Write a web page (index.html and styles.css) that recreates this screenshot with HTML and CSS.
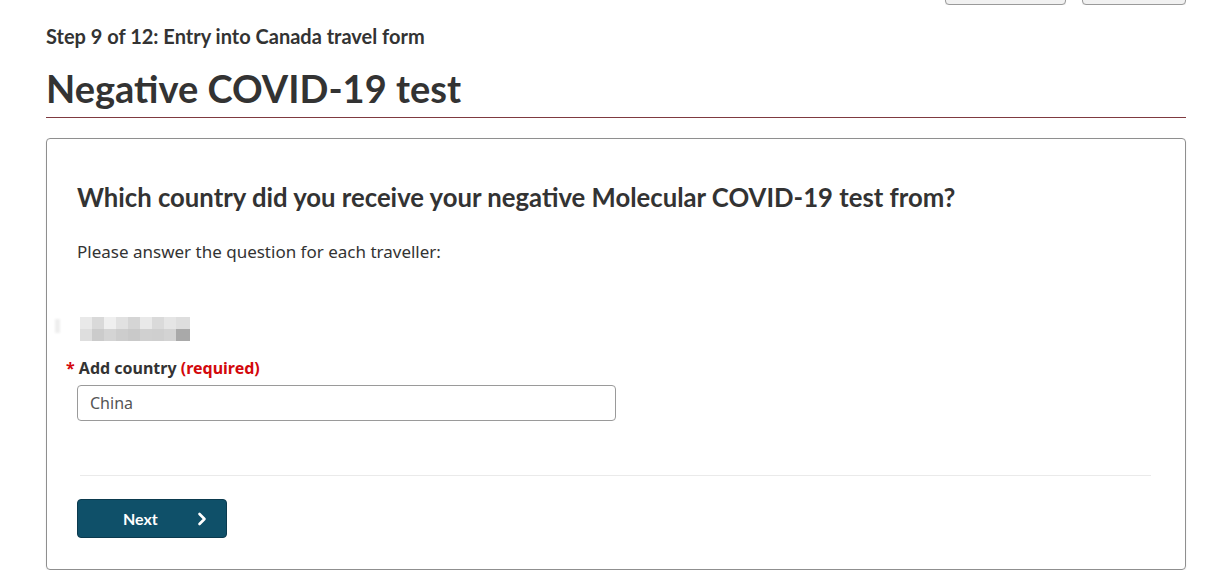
FILE: index.html
```html
<!DOCTYPE html>
<html lang="en">
<head>
<meta charset="utf-8">
<title>Negative COVID-19 test</title>
<link rel="stylesheet" href="styles.css">
</head>
<body>
<main class="page">
  <div class="topbar">
    <span class="tb tb-wide"></span>
    <span class="tb tb-narrow"></span>
  </div>
  <p class="step">Step 9 of 12: Entry into Canada travel form</p>
  <h1 class="title">Negative COVID-19 test</h1>
  <section class="panel">
    <h2 class="question">Which country did you receive your negative Molecular COVID-19 test from?</h2>
    <p class="intro">Please answer the question for each traveller:</p>
    <div class="traveller" aria-hidden="true">
      <span class="fuzz"></span>
      <div class="pix">
        <i class="c1"></i><i class="c2"></i><i class="c3"></i><i class="c4"></i><i class="c5"></i><i class="c6"></i><i class="c7"></i><i class="c8"></i><i class="c9"></i>
        <i class="d1"></i><i class="d2"></i><i class="d3"></i><i class="d4"></i><i class="d5"></i><i class="d6"></i><i class="d7"></i><i class="d8"></i><i class="d9"></i>
      </div>
    </div>
    <label class="field-label" for="country"><span class="star">*</span> Add country <strong class="req">(required)</strong></label>
    <div class="input" id="country">China</div>
    <hr class="divider">
    <button class="next" type="button">
      <span>Next</span>
      <svg width="10" height="14" viewBox="0 0 10 14" aria-hidden="true"><path d="M2.5 2 L7.5 7 L2.5 12" fill="none" stroke="#fff" stroke-width="2.6" stroke-linecap="round" stroke-linejoin="round"/></svg>
    </button>
  </section>
</main>
</body>
</html>
```

FILE: styles.css
```css
* { box-sizing: border-box; }

html, body {
  margin: 0;
  padding: 0;
  background: #fff;
}

body {
  font-family: "Noto Sans", "Open Sans", sans-serif;
  color: #333;
}

.page {
  width: 1140px;
  margin-left: 46px;
}

.topbar {
  display: flex;
  justify-content: flex-end;
  align-items: flex-end;
  gap: 16px;
  height: 5px;
  overflow: hidden;
}

.tb {
  display: block;
  height: 30px;
  border: 1px solid #9a9a9a;
  border-radius: 0 0 4px 4px;
  background: #f1f1f1;
  box-shadow: 0 1px 1px rgba(0,0,0,0.08);
}
.tb-wide { width: 121px; }
.tb-narrow { width: 104px; }

.step {
  margin: 19px 0 0;
  font-family: Lato, sans-serif;
  font-weight: 700;
  font-size: 20px;
  line-height: 24px;
  color: #333;
}

.title {
  margin: 18px 0 0;
  padding-bottom: 6px;
  font-family: Lato, sans-serif;
  font-weight: 700;
  font-size: 38px;
  line-height: 45px;
  color: #333;
  border-bottom: 1px solid #7f3a40;
}

.panel {
  margin-top: 20px;
  border: 1px solid #8f8f8f;
  border-radius: 4px;
  box-shadow: 0 1px 2px rgba(0,0,0,0.08);
  padding: 43px 34px 31px 30px;
}

.question {
  margin: 0;
  font-family: Lato, sans-serif;
  font-weight: 700;
  font-size: 25.7px;
  line-height: 31px;
  color: #333;
}

.intro {
  margin: 27px 0 0;
  font-size: 17px;
  line-height: 24px;
  color: #333;
}

.traveller {
  display: flex;
  align-items: flex-start;
  margin: 53px 0 0 -22px;
  height: 24px;
}

.fuzz {
  width: 5px;
  height: 14px;
  margin-top: 2px;
  background: #eee;
  filter: blur(1px);
}

.pix {
  display: grid;
  grid-template-columns: repeat(8, 12px) 14px;
  grid-template-rows: 12px 12px;
  margin-left: 20px;
  filter: blur(0.6px);
}
.pix i { display: block; }
.c1 { background: #e9e9e9; } .c2 { background: #d9d9d9; } .c3 { background: #efefef; }
.c4 { background: #e1e1e1; } .c5 { background: #d5d5d5; } .c6 { background: #e9e9e9; }
.c7 { background: #dadada; } .c8 { background: #e5e5e5; } .c9 { background: #dedede; }
.d1 { background: #dedede; } .d2 { background: #cbcbcb; } .d3 { background: #d4d4d4; }
.d4 { background: #cdcdcd; } .d5 { background: #c9c9c9; } .d6 { background: #d0d0d0; }
.d7 { background: #cfcfcf; } .d8 { background: #d3d3d3; } .d9 { background: #a9a9a9; }

.field-label {
  display: block;
  margin: 15px 0 0 -11px;
  font-weight: 700;
  font-size: 16px;
  line-height: 24px;
  color: #333;
}
.star { color: #d3080c; }
.req { color: #d3080c; font-weight: 700; }

.input {
  margin-top: 5px;
  width: 539px;
  height: 36px;
  padding: 0 12px;
  border: 1px solid #9a9a9a;
  border-radius: 4px;
  font-size: 16px;
  line-height: 34px;
  color: #555;
}

.divider {
  margin: 54px 0 0 3px;
  border: 0;
  border-top: 1px solid #eaeaea;
  height: 0;
}

.next {
  display: flex;
  align-items: center;
  gap: 39px;
  margin-top: 23px;
  width: 150px;
  height: 39px;
  padding: 0 0 0 45px;
  background: #0f5069;
  border: 1px solid #0b3a4e;
  border-radius: 4px;
  color: #fff;
  font-family: Lato, sans-serif;
  font-weight: 700;
  font-size: 16px;
  cursor: pointer;
}
.next svg { display: block; }
```
